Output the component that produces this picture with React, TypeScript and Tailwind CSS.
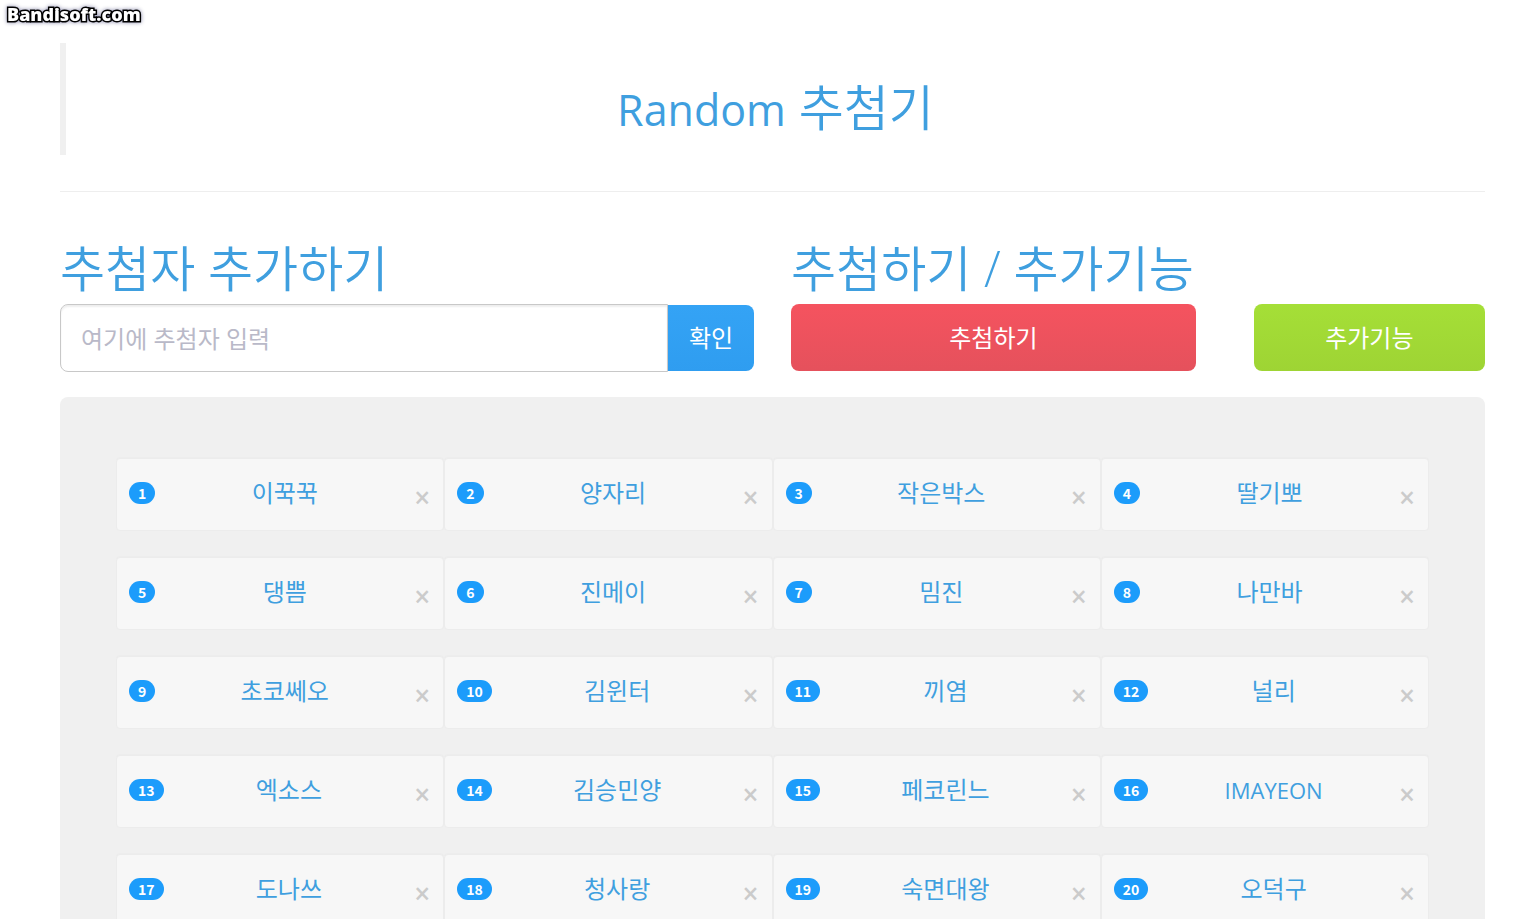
import React, { useState } from "react";
import clsx from "clsx";

const initialNames = [
  "이꾹꾹",
  "양자리",
  "작은박스",
  "딸기뽀",
  "댕쁨",
  "진메이",
  "밈진",
  "나만바",
  "초코쎄오",
  "김윈터",
  "끼염",
  "널리",
  "엑소스",
  "김승민양",
  "페코린느",
  "IMAYEON",
  "도나쓰",
  "청사랑",
  "숙면대왕",
  "오덕구",
];

interface NameCardProps {
  number: number;
  name: string;
  onRemove: () => void;
}

const NameCard = ({ number, name, onRemove }: NameCardProps) => {
  const latin = /^[A-Za-z0-9 ]+$/.test(name);

  return (
    <li className="flex h-[73px] items-start rounded border border-[#ececec] bg-[#f7f7f7] pt-4 pr-[13px] pl-3 shadow-[0_-1px_0_#ededed]">
      <span className="mt-[7px] rounded-full bg-[#1c9cfb] px-[9px] font-['Noto_Sans_CJK_KR',sans-serif] text-sm leading-[22px] font-bold text-white">
        {number}
      </span>
      <span
        className={clsx(
          "flex-1 text-center leading-9",
          latin ? "text-[22px]" : "text-2xl"
        )}
      >
        {name}
      </span>
      <button
        type="button"
        aria-label={`${name} 삭제`}
        onClick={onRemove}
        className="mt-1 w-4 cursor-pointer text-[28px] leading-9 font-semibold text-[#cbcbcb]"
      >
        ×
      </button>
    </li>
  );
};

const App = () => {
  const [names, setNames] = useState(initialNames);
  const [value, setValue] = useState("");

  const addName = (e: React.FormEvent) => {
    e.preventDefault();
    if (!value.trim()) return;
    setNames([...names, value.trim()]);
    setValue("");
  };

  const shuffle = () => {
    setNames([...names].sort(() => Math.random() - 0.5));
  };

  return (
    <div className="relative flex h-screen flex-col overflow-x-hidden overflow-y-hidden bg-white pt-[43px] pr-[45px] pl-[60px] font-['Open_Sans','Noto_Sans_CJK_KR',sans-serif] text-[#3f9fdf]">
      <span className="absolute top-1 left-[7px] text-lg leading-5 font-extrabold text-white [paint-order:stroke_fill] [-webkit-text-stroke:3px_#000] drop-shadow-[0_0_2px_#8888aa]">
        Bandisoft.com
      </span>

      <header className="h-28 shrink-0 border-l-[6px] border-[#f0f0f0] pt-8">
        <h1 className="text-center text-[49px] leading-[64px] font-[350]">
          <span className="text-[43px] font-normal">Random</span> 추첨기
        </h1>
      </header>
      <hr className="mt-9 shrink-0 border-[#eeeeee]" />

      <main className="mt-11 flex min-h-0 flex-1 flex-col">
        <div className="grid shrink-0 grid-cols-2 gap-[37px]">
          <form onSubmit={addName}>
            <h2 className="text-[49px] leading-[64px] font-[350]">
              <label htmlFor="name">추첨자 추가하기</label>
            </h2>
            <div className="mt-1 flex items-center">
              <input
                id="name"
                type="text"
                value={value}
                onChange={(e) => setValue(e.target.value)}
                placeholder="여기에 추첨자 입력"
                className="h-[68px] min-w-0 flex-1 rounded-l-lg border border-[#c8c8c8] px-5 text-2xl shadow-[inset_0_2px_2px_#eeeeee] outline-none placeholder:text-[#b9b9c8]"
              />
              <button
                type="submit"
                className="h-[66px] w-[86px] cursor-pointer rounded-r-lg bg-linear-to-b from-[#34a3f5] to-[#2f9df0] text-2xl text-white"
              >
                확인
              </button>
            </div>
          </form>

          <section>
            <h2 className="text-[49px] leading-[64px] font-[350]">
              추첨하기 / 추가기능
            </h2>
            <div className="mt-1 grid grid-cols-12">
              <button
                type="button"
                onClick={shuffle}
                className="col-span-7 h-[67px] cursor-pointer rounded-lg bg-linear-to-b from-[#f5535f] to-[#e5515c] text-2xl text-white"
              >
                추첨하기
              </button>
              <button
                type="button"
                className="col-span-4 col-start-9 h-[67px] cursor-pointer rounded-lg bg-linear-to-b from-[#a5df37] to-[#9ed434] text-2xl text-white"
              >
                추가기능
              </button>
            </div>
          </section>
        </div>

        <section className="mt-[25px] flex-1 rounded-t-lg bg-[#f0f0f0] px-14 pt-[61px]">
          <ul className="grid grid-cols-4 gap-y-[26px]">
            {names.map((name, i) => (
              <NameCard
                key={name}
                number={i + 1}
                name={name}
                onRemove={() => setNames(names.filter((n) => n !== name))}
              />
            ))}
          </ul>
        </section>
      </main>
    </div>
  );
};

export default App;
